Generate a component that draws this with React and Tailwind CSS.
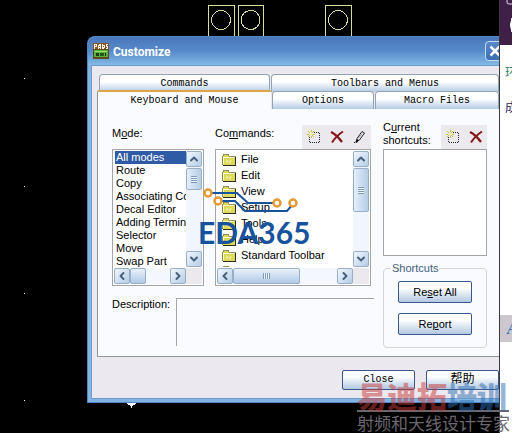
import { ChevronDown, ChevronLeft, ChevronRight, ChevronUp } from 'lucide-react'

const MODES = [
  'All modes',
  'Route',
  'Copy',
  'Associating Components',
  'Decal Editor',
  'Adding Terminal',
  'Selector',
  'Move',
  'Swap Part',
]

const COMMANDS = ['File', 'Edit', 'View', 'Setup', 'Tools', 'Help', 'Standard Toolbar', '']

function BoardCanvas() {
  return (
    <svg className="absolute inset-0 w-full h-full" shapeRendering="crispEdges" aria-hidden="true">
      <g fill="none" stroke="#d9dc9c">
        <path d="M208.500 40V5.500H234.500V40M238.500 40V5.500H263.500V40M325.500 40V5.500H351.500V40" />
        <circle cx="221" cy="20" r="9.500" />
        <circle cx="250.500" cy="20" r="9.500" />
        <circle cx="338" cy="20" r="9.500" />
      </g>
      <g fill="#fff">
        <rect x="24" y="78" width="1" height="1" />
        <rect x="24" y="186" width="1" height="1" />
        <rect x="24" y="293" width="1" height="1" />
        <rect x="24" y="400" width="1" height="1" />
        <path d="M127 401h9v3l-2 1h-1v1h-1v2h-1v-2h-1v-1h-1l-2-1z" />
      </g>
    </svg>
  )
}

function AppIcon() {
  return (
    <svg width="16" height="16" viewBox="0 0 16 16" className="shrink-0" shapeRendering="crispEdges" aria-hidden="true">
      <rect width="16" height="16" fill="#5d4a1c" />
      <rect width="16" height="6" fill="#86542c" />
      <path
        d="M1.500 6V1.500h2v2h-2M5.500 6V2.500h1v-1h1v4.500M5.500 4.500h2M9.500 1v4.500h1v-1h1v-2h-1v-1M15 1.500h-1.500v1.500h1v2.500H13"
        fill="none"
        stroke="#fff4dc"
      />
      <rect x="1" y="7" width="14" height="7" fill="#5fae38" />
      <rect x="2" y="8" width="12" height="1" fill="#9ade62" />
      <rect x="3" y="10" width="3" height="3" fill="#173c14" />
      <rect x="7" y="10" width="4" height="3" fill="#235a1b" />
      <rect x="12" y="10" width="1" height="3" fill="#123010" />
    </svg>
  )
}

function FolderIcon() {
  return (
    <svg width="15" height="12" viewBox="0 0 15 12" className="shrink-0" shapeRendering="crispEdges" aria-hidden="true">
      <path d="M1 3V2L2 1H6L7 3H13V11H1Z" fill="#dcd95c" />
      <path d="M.5 11V2.500L2 .5H6L7.500 2.500H13V11" fill="none" stroke="#969058" />
      <path d="M1.500 10V3.500H12" fill="none" stroke="#fbf9c4" />
      <path d="M4 6h2v1h2V6h2v1H9v2H7V8H5v1H4z" fill="#eeeb94" />
      <path d="M1 11.500H13.500V3" fill="none" stroke="#2c2b1c" />
    </svg>
  )
}

function NewIcon() {
  return (
    <svg width="14" height="14" viewBox="0 0 14 14" shapeRendering="crispEdges" aria-hidden="true">
      <path d="M7 2.500h6M2.500 7v6M3 12.500h10M12.500 3v10" fill="none" stroke="#222" strokeDasharray="1 1" />
      <path d="M1 1l2 2M7 1L5 3M1 7l2-2M5 5l2 2M4 0v2M0 4h2M6 4h2M4 6v2" stroke="#c3c13a" fill="none" />
      <rect x="3" y="3" width="2" height="2" fill="#f0ee88" />
    </svg>
  )
}

function DeleteIcon() {
  return (
    <svg width="14" height="14" viewBox="0 0 14 14" aria-hidden="true">
      <path d="M1 2C5 4 9 8 12 12" fill="none" stroke="#821818" strokeWidth="2.400" />
      <path d="M13 1.500C9 4 5 8 2 12.500" fill="none" stroke="#821818" strokeWidth="2" />
    </svg>
  )
}

function PencilIcon() {
  return (
    <svg width="14" height="14" viewBox="0 0 14 14" aria-hidden="true">
      <path d="M9 1.500L4 8.500L3.500 11.500L6.500 10L11.500 3Z" fill="#f4f4f4" stroke="#222" />
      <path d="M9 3.500L5.500 8.500" stroke="#999" />
      <path d="M3 12.500L5 9.500" stroke="#111" strokeWidth="2" />
      <path d="M1 12.500h1" stroke="#111" />
    </svg>
  )
}

function ToolButton({ label, children }) {
  return (
    <button type="button" aria-label={label} className="w-[23px] h-6 flex items-center justify-center">
      {children}
    </button>
  )
}

function ScrollButton({ label, icon: Icon }) {
  return (
    <button
      type="button"
      aria-label={label}
      className="w-4 h-4 shrink-0 flex items-center justify-center rounded-xs border border-[#98afc8] bg-linear-to-br from-[#f1f7fd] to-[#b5cde6]"
    >
      <Icon size={12} strokeWidth={4} className="text-[#46607e]" />
    </button>
  )
}

function ListPane({ label, thumb, hThumb, grip, children }) {
  return (
    <div className="h-[137px] border border-[#a3a5ab] bg-white p-px flex flex-col">
      <div className="flex-1 min-h-0 flex">
        <ul role="listbox" aria-label={label} className="flex-1 min-w-0 overflow-hidden pl-px">
          {children}
        </ul>
        <div className="w-4 shrink-0 flex flex-col bg-[#f1f5fd]">
          <ScrollButton label="Scroll up" icon={ChevronUp} />
          <div className={`${thumb} mt-px rounded-xs border border-[#98afc8] bg-linear-to-r from-[#e4effb] to-[#b5cde6] flex items-center justify-center`}>
            <span className="w-[6px] h-[7px] bg-[repeating-linear-gradient(#8199b5_0_1px,#eef5fc_1px_2px)]" />
          </div>
          <div className="flex-1" />
          <ScrollButton label="Scroll down" icon={ChevronDown} />
        </div>
      </div>
      <div className="flex h-4 mt-px shrink-0 bg-[#ece9ee]">
        <div className="flex-1 flex bg-[#f4f7fe]">
          <ScrollButton label="Scroll left" icon={ChevronLeft} />
          <div className={`${hThumb} h-4 rounded-xs border border-[#98afc8] bg-linear-to-b from-[#e9f2fc] to-[#b0cae5] flex items-center justify-center`}>
            {grip && <span className="w-[7px] h-[6px] bg-[repeating-linear-gradient(90deg,#8199b5_0_1px,#eef5fc_1px_2px)]" />}
          </div>
          <div className="flex-1" />
          <ScrollButton label="Scroll right" icon={ChevronRight} />
        </div>
        <div className="w-4" />
      </div>
    </div>
  )
}

function Tab({ className, children }) {
  return (
    <button
      type="button"
      role="tab"
      aria-selected="false"
      className={`${className} h-[18px] rounded-t-sm border border-b-0 border-[#94a3b3] bg-linear-to-b from-white from-40% to-[#b4cbe5] text-center`}
    >
      {children}
    </button>
  )
}

function PushButton({ className, children }) {
  return (
    <button
      type="button"
      className={`${className} rounded-xs border border-[#39598c] bg-linear-to-b from-white from-30% to-[#b3c8e2] text-center text-black`}
    >
      {children}
    </button>
  )
}

function KeyboardPanel() {
  return (
    <div className="flex border-l border-b border-[#8f969e] bg-[#fafbff] pl-[14px] pr-3 pt-3 pb-2 text-[11px] leading-[13px]">
      <div className="flex-1 min-w-0 pr-[9px]">
        <div className="flex gap-[11px] pr-[3px]">
          <div className="w-[92px]">
            <div className="h-7 pt-[6px]">
              M<u>o</u>de:
            </div>
            <ListPane label="Mode" thumb="h-[22px]" hThumb="w-4">
              {MODES.map((mode, i) => (
                <li
                  key={mode}
                  role="option"
                  aria-selected={i === 0}
                  className={`h-[13px] pl-px whitespace-nowrap overflow-hidden ${i === 0 ? 'bg-[#2f5aa5] text-white' : ''}`}
                >
                  {mode}
                </li>
              ))}
            </ListPane>
          </div>
          <div className="flex-1 min-w-0">
            <div className="h-7 flex items-end justify-between">
              <span className="self-start pt-[6px]">
                Co<u>m</u>mands:
              </span>
              <div className="flex bg-[#ebe8ee]">
                <ToolButton label="New command"><NewIcon /></ToolButton>
                <ToolButton label="Delete command"><DeleteIcon /></ToolButton>
                <ToolButton label="Edit command"><PencilIcon /></ToolButton>
              </div>
            </div>
            <ListPane label="Commands" thumb="h-[44px]" hThumb="w-[67px]" grip>
              {COMMANDS.map((command) => (
                <li key={command} role="option" aria-selected="false" className="h-4 pl-1 pt-px flex items-center gap-1 whitespace-nowrap">
                  <FolderIcon />
                  {command}
                </li>
              ))}
            </ListPane>
          </div>
        </div>
        <div className="flex mt-3 gap-2">
          <span className="w-14 shrink-0">Description:</span>
          <div className="flex-1 h-12 border-t border-l border-[#a3a5ab]" />
        </div>
      </div>

      <div className="w-[104px] shrink-0">
        <div className="h-7 flex justify-between items-end">
          <span className="self-start">
            C<u>u</u>rrent shortcuts:
          </span>
          <div className="flex shrink-0 bg-[#ebe8ee]">
            <ToolButton label="New shortcut"><NewIcon /></ToolButton>
            <ToolButton label="Delete shortcut"><DeleteIcon /></ToolButton>
          </div>
        </div>
        <ul role="listbox" aria-label="Current shortcuts" className="h-[107px] border border-[#a3a5ab] bg-white" />
        <fieldset className="mt-[6px] h-[86px] rounded border border-[#d2d2d8] px-[14px] flex flex-col gap-[10px]">
          <legend className="-ml-[7px] px-px text-[#41607c]">Shortcuts</legend>
          <PushButton className="h-[22px] mt-[6px]">
            Re<u>s</u>et All
          </PushButton>
          <PushButton className="h-[22px]">
            Re<u>p</u>ort
          </PushButton>
        </fieldset>
      </div>
    </div>
  )
}

function CustomizeDialog() {
  return (
    <section
      role="dialog"
      aria-label="Customize"
      className="relative rounded-tl-lg border-l border-t border-b border-[#5288c2] bg-[#83b4e2] overflow-hidden"
    >
      <header className="h-7 pl-[5px] flex items-center bg-linear-to-b from-[#4b77bb] via-[#568acb] to-[#84b9e6]">
        <AppIcon />
        <h1 className="ml-1 pt-[2px] flex-1 font-['Roboto',sans-serif] font-bold text-[12px] text-white">Customize</h1>
        <button
          type="button"
          aria-label="Close window"
          className="h-5 w-5 -mr-[6px] shrink-0 rounded-sm border border-[#c4dcf3] bg-linear-to-b from-[#5688c9] to-[#3d70b3] flex items-center justify-center"
        >
          <svg width="12" height="12" viewBox="0 0 12 12" aria-hidden="true">
            <path d="M1.500 1.500l9 9M10.500 1.500l-9 9" stroke="#fff" strokeWidth="2.500" />
          </svg>
        </button>
      </header>
      <div className="ml-[3px] mb-[3px] border-t border-l border-b border-[#6b9ccc] bg-[#ebe8ef]">
        <div className="pl-[5px] pt-2 font-['Liberation_Mono',monospace] text-[10px] leading-4">
          <div role="tablist" aria-label="Customize pages">
            <div className="flex h-4 pl-[2px] gap-px">
              <Tab className="w-[171px]">Commands</Tab>
              <Tab className="flex-1">Toolbars and Menus</Tab>
            </div>
            <div className="relative flex items-end gap-px">
              <button
                type="button"
                role="tab"
                aria-selected="true"
                className="w-[174px] h-[19px] border-l border-l-[#8f969e] border-t-2 border-t-[#dfa445] rounded-t-xs bg-[#fafbff] text-center"
              >
                Keyboard and Mouse
              </button>
              <Tab className="w-[102px]">Options</Tab>
              <Tab className="flex-1">Macro Files</Tab>
            </div>
          </div>
        </div>
        <div className="pl-[5px]">
          <KeyboardPanel />
        </div>
        <footer className="flex justify-end gap-[11px] pt-[13px] pb-2 font-['Liberation_Mono','Noto_Sans_CJK_SC',monospace] text-[10px] leading-4">
          <PushButton className="w-[73px] h-5">Close</PushButton>
          <PushButton className="w-[73px] h-5">
            <span className="text-[12px]">帮助</span>
          </PushButton>
        </footer>
      </div>
    </section>
  )
}

function EdaLogo() {
  return (
    <div className="absolute left-[198px] top-[188px] text-[#17529c]">
      <svg width="102" height="28" viewBox="0 0 102 28" className="ml-1" aria-hidden="true">
        <g fill="none" stroke="#17529c" strokeWidth="2">
          <path d="M6 5H35L46 15H75" />
          <path d="M16 13H33L43 23H85L91 16" />
        </g>
        <g fill="#fff" stroke="#e79a32" strokeWidth="2.500">
          <circle cx="6" cy="5" r="3.500" />
          <circle cx="16" cy="13" r="3.500" />
          <circle cx="75" cy="15" r="3.500" />
          <circle cx="91" cy="15" r="3.500" />
        </g>
      </svg>
      <p className="font-['Lato',sans-serif] font-bold text-[30px] leading-8">EDA365</p>
    </div>
  )
}

function Watermark() {
  return (
    <div className="absolute right-[3px] bottom-0 w-[152px] font-['Noto_Sans_CJK_SC',sans-serif] whitespace-nowrap">
      <p className="text-[30px] leading-[30px] font-black opacity-50">
        <span className="text-[#c93a3a]">易迪拓</span>
        <span className="text-[#2f6fb4]">培训</span>
      </p>
      <p className="border-t-2 border-[#6b676e] text-[17px] leading-[21px] text-[#6b676e]">射频和天线设计专家</p>
    </div>
  )
}

function SideWindow() {
  return (
    <aside className="w-[13px] shrink-0 overflow-hidden border-l border-[#3a3a3e] bg-white whitespace-nowrap font-['Noto_Sans_CJK_SC',sans-serif] text-[12px] leading-4">
      <div className="h-[45px] bg-[#3f2148] overflow-hidden">
        <svg width="12" height="45" viewBox="0 0 12 45" aria-hidden="true">
          <path d="M7 0V2Q7 4 9 4H12" fill="none" stroke="#e4dce8" />
          <path d="M12 18Q9 25 12 32Z" fill="#fff" stroke="#fff" />
        </svg>
      </div>
      <p className="mt-[19px] pl-[5px] text-[#268060]">环</p>
      <p className="mt-[19px] pl-[5px] text-[#1c2160]">成</p>
      <div className="mt-[200px] h-[27px] pl-[7px] pt-[6px] bg-[#cdc8d0] font-['Liberation_Serif',serif] font-bold italic text-[16px] text-[#3870b8]">
        A
      </div>
    </aside>
  )
}

export default function App() {
  return (
    <div className="relative flex min-h-screen overflow-hidden bg-black text-black font-['Liberation_Sans',sans-serif]">
      <main className="relative flex-1 min-w-0 pl-[87px] pt-9 overflow-hidden">
        <BoardCanvas />
        <CustomizeDialog />
        <EdaLogo />
      </main>
      <SideWindow />
      <Watermark />
    </div>
  )
}
